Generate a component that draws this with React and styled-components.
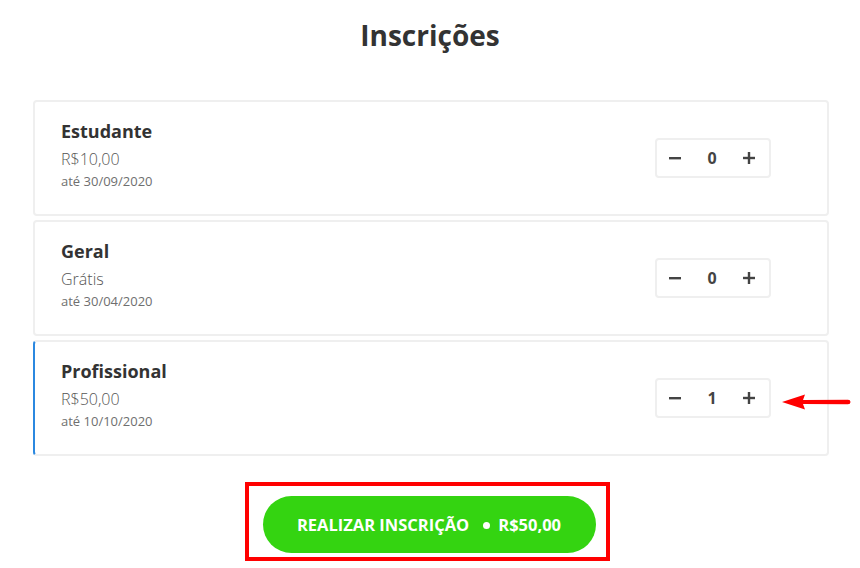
import styled, { createGlobalStyle } from 'styled-components';

const tickets = [
  { id: 1, name: 'Estudante', price: 'R$10,00', until: 'até 30/09/2020', qty: 0 },
  { id: 2, name: 'Geral', price: 'Grátis', until: 'até 30/04/2020', qty: 0 },
  { id: 3, name: 'Profissional', price: 'R$50,00', until: 'até 10/10/2020', qty: 1, active: true },
];

export default function App() {
  return (
    <Page>
      <GlobalStyle />
      <Title>Inscrições</Title>
      <List>
        {tickets.map(ticket => (
          <Card key={ticket.id} active={ticket.active}>
            <Info>
              <Name>{ticket.name}</Name>
              <Price>{ticket.price}</Price>
              <Until>{ticket.until}</Until>
            </Info>
            <Counter>
              <CountButton>
                <svg width="12" height="12" viewBox="0 0 12 12">
                  <rect x="0" y="5" width="12" height="2.4" fill="#444" />
                </svg>
              </CountButton>
              <Count>{ticket.qty}</Count>
              <CountButton>
                <svg width="12" height="12" viewBox="0 0 12 12">
                  <rect x="0" y="4.8" width="12" height="2.4" fill="#444" />
                  <rect x="4.8" y="0" width="2.4" height="12" fill="#444" />
                </svg>
              </CountButton>
            </Counter>
            {ticket.active && (
              <Arrow width="70" height="18" viewBox="0 0 70 18">
                <path d="M0 9 L23 1.5 L21 7 L66 6.8 Q68.5 6.8 68.5 9 Q68.5 11.2 66 11.2 L21 11 L23 16.5 Z" fill="#f00" />
              </Arrow>
            )}
          </Card>
        ))}
      </List>
      <Footer>
        <Highlight>
          <SubmitButton>
            REALIZAR INSCRIÇÃO <Dot /> R$50,00
          </SubmitButton>
        </Highlight>
      </Footer>
    </Page>
  );
}

const GlobalStyle = createGlobalStyle`
  body {
    margin: 0;
    background: #fff;
    font-family: "Open Sans", "Liberation Sans", sans-serif;
  }
`;

const Page = styled.main`
  width: 860px;
  height: 568px;
  overflow: hidden;
`;

const Title = styled.h1`
  margin: 0;
  padding-top: 15px;
  height: 100px;
  box-sizing: border-box;
  text-align: center;
  font-size: 28px;
  font-weight: 700;
  color: #333;
  line-height: 40px;
`;

const List = styled.section`
  display: grid;
  gap: 4px;
  margin: 0 31px 0 33px;
`;

const Card = styled.div`
  position: relative;
  display: flex;
  align-items: center;
  justify-content: space-between;
  height: 116px;
  box-sizing: border-box;
  padding: 0 56px 0 26px;
  border: 2px solid #efefef;
  border-left: 2px solid ${p => (p.active ? '#2b88e0' : '#efefef')};
  border-radius: 4px;
  background: #fff;
`;

const Info = styled.div`
  display: flex;
  flex-direction: column;
  align-self: flex-start;
  padding-top: 17px;
`;

const Name = styled.h3`
  margin: 0;
  font-size: 18px;
  font-weight: 700;
  color: #333;
  line-height: 24px;
`;

const Price = styled.span`
  margin-top: 4px;
  font-size: 16px;
  font-weight: 300;
  color: #555;
  line-height: 24px;
`;

const Until = styled.span`
  font-size: 13px;
  color: #6f6f6f;
  line-height: 20px;
`;

const Counter = styled.div`
  display: flex;
  align-items: center;
  width: 116px;
  height: 40px;
  box-sizing: border-box;
  border: 2px solid #efefef;
  border-radius: 4px;
  padding-right: 2px;
`;

const CountButton = styled.div`
  flex: 1;
  display: flex;
  align-items: center;
  justify-content: center;
`;

const Count = styled.span`
  flex: 1;
  text-align: center;
  font-size: 16px;
  font-weight: 700;
  color: #444;
`;

const Arrow = styled.svg`
  position: absolute;
  left: 747px;
  top: 51px;
`;

const Footer = styled.div`
  display: flex;
  justify-content: center;
  padding-top: 26px;
  padding-right: 6px;
`;

const Highlight = styled.div`
  border: 4px solid #f00;
  padding: 10px 10px 4px 14px;
`;

const SubmitButton = styled.button`
  display: flex;
  align-items: center;
  justify-content: center;
  gap: 8px;
  width: 333px;
  height: 57px;
  border: none;
  border-radius: 29px;
  background: #34d411;
  color: #fff;
  font-family: "Open Sans", "Liberation Sans", sans-serif;
  font-size: 16.5px;
  font-weight: 700;
`;

const Dot = styled.span`
  width: 7px;
  height: 7px;
  margin: 2px 0 0 6px;
  border-radius: 50%;
  background: #fff;
`;
